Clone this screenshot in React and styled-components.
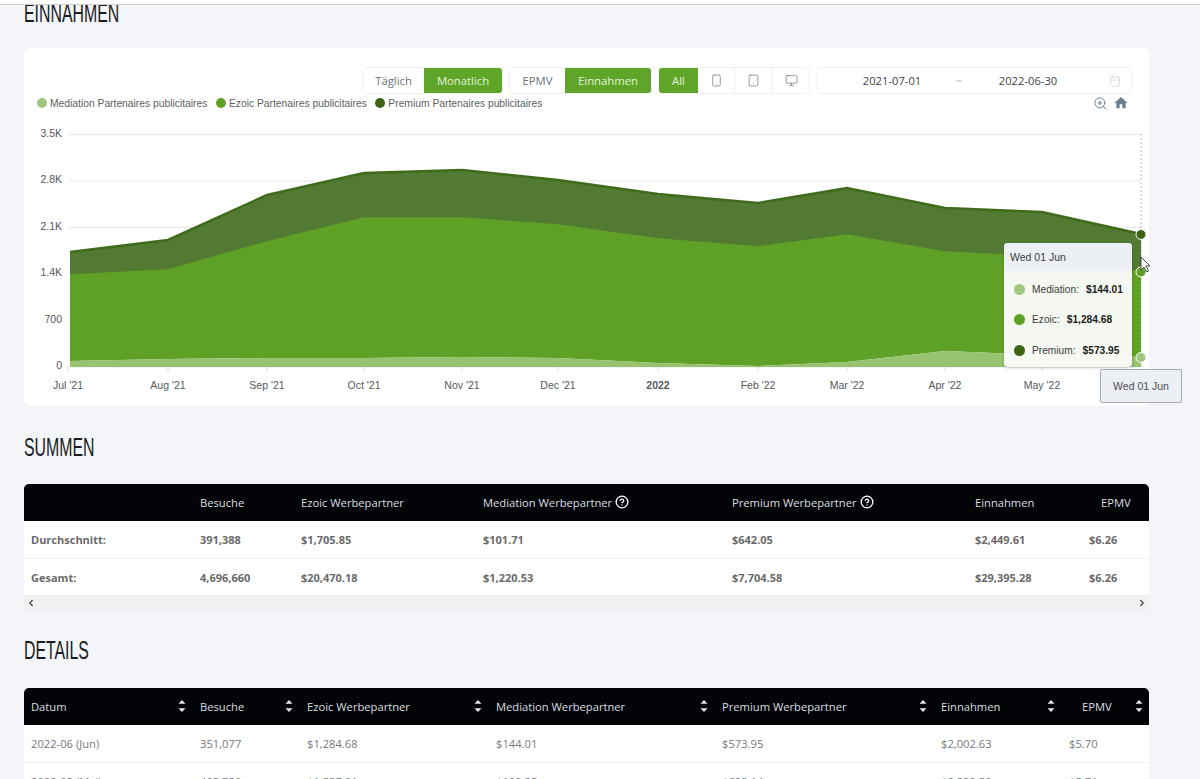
import React from "react";
import styled, { createGlobalStyle } from "styled-components";
import { CircleHelp, Smartphone, Tablet, Monitor, Calendar, ZoomIn, ChevronLeft, ChevronRight } from "lucide-react";

const Global = createGlobalStyle`
  html, body { margin: 0; padding: 0; height: 779px; overflow: hidden; background: #f4f5f9; }
  body { font-family: "Open Sans", "Liberation Sans", sans-serif; }
  * { box-sizing: border-box; }
`;

const TopStrip = styled.div`
  height: 5px;
  background: #fff;
  border-bottom: 1px solid #cfd1d4;
`;
const Page = styled.main`
  padding: 0 51px 0 24px;
`;
const Title = styled.h2`
  margin: ${p => p.$mt || 0}px 0 0;
  height: ${p => (p.$clipped ? "24px" : "40px")};
  line-height: ${p => (p.$clipped ? "16px" : "40px")};
  overflow: hidden;
  font-family: "Liberation Sans", sans-serif;
  font-weight: 400;
  font-size: 26px;
  color: #1a1c20;
  span {
    display: inline-block;
    transform: scaleX(0.61);
    transform-origin: left center;
  }
`;
const Card = styled.section`
  position: relative;
  margin: 19px 0 21px;
  height: 358px;
  background: #fff;
  border-radius: 6px;
  padding-top: 19px;
`;
const Toolbar = styled.div`
  display: flex;
  justify-content: flex-end;
  gap: 6px;
  padding-right: 17px;
`;
const Segment = styled.div`
  display: flex;
  height: 27px;
  border-radius: 4px;
  overflow: hidden;
  border: 1px solid #f0f1f3;
`;
const SegButton = styled.button`
  width: ${p => p.$w}px;
  border: 0;
  border-right: ${p => (p.$divider ? "1px solid #f0f1f3" : "0")};
  padding: 0;
  display: flex;
  align-items: center;
  justify-content: center;
  background: ${p => (p.$active ? "#5fa529" : "#fff")};
  color: ${p => (p.$active ? "#e6f2da" : "#6d7178")};
  font: 400 11.3px "Open Sans", sans-serif;
`;
const DateBox = styled.div`
  width: 315px;
  height: 27px;
  margin-left: 1px;
  display: grid;
  grid-template-columns: 96px 38px 100px 1fr;
  align-items: center;
  justify-items: center;
  border: 1px solid #f0f1f3;
  border-radius: 4px;
  color: #40444a;
  font-size: 11.2px;
  padding-left: 26px;
  svg { color: #c9ccd1; justify-self: end; margin-right: 10px; }
`;
const Sep = styled.span`
  color: #b5b8bd;
`;
const LegendRow = styled.div`
  margin-top: 2px;
  height: 14px;
  padding: 0 20px 0 13px;
  display: flex;
  align-items: center;
  justify-content: space-between;
`;
const Legend = styled.div`
  display: flex;
  gap: 8.5px;
`;
const LegendItem = styled.span`
  display: flex;
  align-items: center;
  gap: 3px;
  font: 10.3px "Liberation Sans", sans-serif;
  color: #5c5f63;
`;
const Dot = styled.i`
  display: block;
  width: ${p => p.$s || 10}px;
  height: ${p => p.$s || 10}px;
  border-radius: 50%;
  background: ${p => p.$c};
`;
const ChartTools = styled.div`
  display: flex;
  align-items: center;
  gap: 5px;
  color: #6e8192;
`;
const HomeIcon = styled.svg`
  width: 16px;
  height: 16px;
  fill: #6e8192;
`;
const ChartSvg = styled.svg`
  display: block;
  margin-top: 5px;
`;
const Tooltip = styled.div`
  position: absolute;
  left: 980px;
  top: 195px;
  width: 128px;
  height: 124px;
  background: rgba(250, 251, 248, 0.97);
  border-radius: 4px;
  box-shadow: 0 1px 3px rgba(0,0,0,.2);
  font: 10.2px "Liberation Sans", sans-serif;
  color: #3a3d40;
  overflow: hidden;
`;
const TooltipHead = styled.div`
  height: 28px;
  line-height: 28px;
  padding-left: 6px;
  background: #eceff3;
  font-size: 10.5px;
`;
const TooltipBody = styled.div`
  display: flex;
  flex-direction: column;
  gap: 18.5px;
  padding: 12px 0 0 10px;
`;
const TooltipRow = styled.div`
  display: flex;
  align-items: center;
  height: 12px;
  b { color: #222; margin-left: 7px; font-weight: 700; }
  span { margin-left: 7px; }
`;
const XLabel = styled.div`
  position: absolute;
  left: 1076px;
  top: 321px;
  width: 82px;
  height: 34px;
  display: flex;
  align-items: center;
  justify-content: center;
  background: #eceff3;
  border: 1px solid #a6a9ae;
  border-radius: 2px;
  font: 10.5px "Liberation Sans", sans-serif;
  color: #4a4d52;
`;
const Table = styled.div`
  margin-top: ${p => p.$mt}px;
  border-radius: 5px 5px 0 0;
  overflow: hidden;
`;
const Row = styled.div`
  display: grid;
  grid-template-columns: ${p => p.$cols};
  height: ${p => p.$h || 37}px;
  background: #fff;
  border-bottom: 1px solid #eef0f2;
  align-items: center;
  font-size: ${p => (p.$bold ? 11 : 11.2)}px;
  font-weight: ${p => (p.$bold ? 700 : 400)};
  color: ${p => (p.$bold ? "#6a6a6a" : "#77797c")};
`;
const HeadRow = styled(Row)`
  background: #020407;
  color: #dcdde0;
  border-bottom: 0;
  font-weight: 400;
  font-size: 11.2px;
  padding-bottom: 1px;
`;
const Cell = styled.div`
  padding-left: ${p => p.$pl ?? 7}px;
  white-space: nowrap;
`;
const HeadCell = styled(Cell)`
  display: flex;
  align-items: center;
  gap: 3px;
  justify-content: ${p => (p.$sort ? "space-between" : "flex-start")};
  padding-right: ${p => (p.$sort ? (p.$pr ?? 7) : 0)}px;
`;
const Scroller = styled.div`
  height: 14px;
  background: #f0f1f3;
  display: flex;
  justify-content: space-between;
  align-items: center;
  padding: 0 2px;
  color: #444;
`;
const SortSvg = styled.svg`
  width: 8px;
  height: 14px;
  fill: #e8e8e8;
  flex: none;
`;
const Cursor = styled.svg`
  position: absolute;
  left: 1116px;
  top: 208px;
  width: 11px;
  height: 17px;
`;

const Sort = () => (
  <SortSvg viewBox="0 0 8 14"><path d="M4 1 7.5 4.8H.5zM4 13 .5 9.2h7z" /></SortSvg>
);

const X = [70, 168, 267, 364, 462, 558, 658, 758, 847, 945, 1042, 1141];
const PREM = [252, 240, 195, 173, 170, 180, 194, 203, 188, 208, 212, 234];
const EZ = [275, 270, 242, 218, 218, 225, 239, 247, 235, 252, 257, 272];
const MED = [361, 359, 358, 358, 357, 358, 363, 366, 362, 351, 355, 357];
const BASE = 367;
const line = a => a.map((y, i) => `${X[i]},${y}`).join(" L");
const area = (top, bottom) => {
  const back = bottom ? [...bottom].reverse().map((y, i) => `${X[X.length - 1 - i]},${y}`).join(" L") : `${X[X.length - 1]},${BASE} L${X[0]},${BASE}`;
  return `M${line(top)} L${back} Z`;
};
const GRID = [["3.5K", 134.5], ["2.8K", 181], ["2.1K", 227.5], ["1.4K", 274], ["700", 320.5], ["0", 367]];
const TICKS = [["Jul '21", 68], ["Aug '21", 168], ["Sep '21", 267], ["Oct '21", 364], ["Nov '21", 462], ["Dec '21", 558], ["2022", 658, true], ["Feb '22", 758], ["Mar '22", 847], ["Apr '22", 945], ["May '22", 1042]];

const Chart = () => (
  <ChartSvg width="1125" height="285" viewBox="24 115 1125 285" fontFamily="Liberation Sans, sans-serif" fontSize="10.5" fill="#55585c">
    {GRID.map(([l, y]) => (
      <g key={l}>
        <line x1="69" x2="1141" y1={y} y2={y} stroke="#e6e7e9" />
        <text x="62" y={y + 2} textAnchor="end">{l}</text>
      </g>
    ))}
    <line x1="1141" x2="1141" y1="134" y2="367" stroke="#b9bcc0" strokeDasharray="2 2" />
    <path d={area(PREM, EZ)} fill="#527a33" />
    <path d={area(EZ, MED)} fill="#5fa026" />
    <path d={area(MED)} fill="#97c26f" />
    <path d={`M${line(PREM)}`} fill="none" stroke="#3f6b1a" strokeWidth="2.5" />
    <path d={`M${line(EZ)}`} fill="none" stroke="#5fa026" strokeWidth="1.5" />
    {TICKS.map(([l, x, b]) => (
      <g key={l}>
        <line x1={x} x2={x} y1="367" y2="372" stroke="#dcdde0" />
        <text x={x} y="388.5" textAnchor="middle" fontWeight={b ? 700 : 400}>{l}</text>
      </g>
    ))}
    <circle cx="1141" cy="234.5" r="5" fill="#3d6314" stroke="#fff" />
    <circle cx="1141" cy="272" r="5" fill="#5fa127" stroke="#fff" />
    <circle cx="1141" cy="357.5" r="5" fill="#a0c77f" stroke="#fff" />
  </ChartSvg>
);

const SUM_COLS = "169px 101px 182px 249px 243px 114px 67px";
const DET_COLS = "169px 107px 189px 226px 219px 128px 87px";

const Help = () => <CircleHelp size={14} color="#fff" strokeWidth={2.3} />;

export default function App() {
  return (
    <>
      <Global />
      <TopStrip />
      <Page>
        <Title $clipped><span>EINNAHMEN</span></Title>
        <Card>
          <Toolbar>
            <Segment>
              <SegButton $w={61}>Täglich</SegButton>
              <SegButton $w={78} $active>Monatlich</SegButton>
            </Segment>
            <Segment>
              <SegButton $w={55}>EPMV</SegButton>
              <SegButton $w={86} $active>Einnahmen</SegButton>
            </Segment>
            <Segment>
              <SegButton $w={39} $active>All</SegButton>
              <SegButton $w={37} $divider><Smartphone size={13} strokeWidth={1.3} /></SegButton>
              <SegButton $w={38} $divider><Tablet size={13} strokeWidth={1.3} /></SegButton>
              <SegButton $w={36}><Monitor size={13} strokeWidth={1.3} /></SegButton>
            </Segment>
            <DateBox>
              <span>2021-07-01</span>
              <Sep>~</Sep>
              <span>2022-06-30</span>
              <Calendar size={12} strokeWidth={1.2} />
            </DateBox>
          </Toolbar>
          <LegendRow>
            <Legend>
              <LegendItem><Dot $c="#a0c77f" />Mediation Partenaires publicitaires</LegendItem>
              <LegendItem><Dot $c="#5fa127" />Ezoic Partenaires publicitaires</LegendItem>
              <LegendItem><Dot $c="#3d6314" />Premium Partenaires publicitaires</LegendItem>
            </Legend>
            <ChartTools>
              <ZoomIn size={15} strokeWidth={1.6} />
              <HomeIcon viewBox="0 0 24 24"><path d="M10 20v-6h4v6h5v-8h3L12 3 2 12h3v8z" /></HomeIcon>
            </ChartTools>
          </LegendRow>
          <Chart />
          <Tooltip>
            <TooltipHead>Wed 01 Jun</TooltipHead>
            <TooltipBody>
              <TooltipRow><Dot $s={11} $c="#a0c77f" /><span>Mediation:</span><b>$144.01</b></TooltipRow>
              <TooltipRow><Dot $s={11} $c="#5fa127" /><span>Ezoic:</span><b>$1,284.68</b></TooltipRow>
              <TooltipRow><Dot $s={11} $c="#3d6314" /><span>Premium:</span><b>$573.95</b></TooltipRow>
            </TooltipBody>
          </Tooltip>
          <XLabel>Wed 01 Jun</XLabel>
          <Cursor viewBox="0 0 11 17"><path d="M1 1v13l3-3 2.5 5 2-1-2.5-5H10z" fill="#fff" stroke="#333" strokeWidth=".9" /></Cursor>
        </Card>

        <Title><span>SUMMEN</span></Title>
        <Table $mt={17}>
          <HeadRow $cols={SUM_COLS}>
            <HeadCell />
            <HeadCell>Besuche</HeadCell>
            <HeadCell>Ezoic Werbepartner</HeadCell>
            <HeadCell>Mediation Werbepartner <Help /></HeadCell>
            <HeadCell>Premium Werbepartner <Help /></HeadCell>
            <HeadCell>Einnahmen</HeadCell>
            <HeadCell $pl={19}>EPMV</HeadCell>
          </HeadRow>
          <Row $cols={SUM_COLS} $bold $h={38}>
            <Cell>Durchschnitt:</Cell><Cell>391,388</Cell><Cell>$1,705.85</Cell><Cell>$101.71</Cell><Cell>$642.05</Cell><Cell>$2,449.61</Cell><Cell>$6.26</Cell>
          </Row>
          <Row $cols={SUM_COLS} $bold $h={37}>
            <Cell>Gesamt:</Cell><Cell>4,696,660</Cell><Cell>$20,470.18</Cell><Cell>$1,220.53</Cell><Cell>$7,704.58</Cell><Cell>$29,395.28</Cell><Cell>$6.26</Cell>
          </Row>
          <Scroller><ChevronLeft size={10} strokeWidth={3} /><ChevronRight size={10} strokeWidth={3} /></Scroller>
        </Table>

        <Title $mt={20}><span>DETAILS</span></Title>
        <Table $mt={18}>
          <HeadRow $cols={DET_COLS}>
            <HeadCell $sort>Datum<Sort /></HeadCell>
            <HeadCell $sort>Besuche<Sort /></HeadCell>
            <HeadCell $sort>Ezoic Werbepartner<Sort /></HeadCell>
            <HeadCell $sort>Mediation Werbepartner<Sort /></HeadCell>
            <HeadCell $sort>Premium Werbepartner<Sort /></HeadCell>
            <HeadCell $sort>Einnahmen<Sort /></HeadCell>
            <HeadCell $sort $pl={20} $pr={6}>EPMV<Sort /></HeadCell>
          </HeadRow>
          <Row $cols={DET_COLS} $h={38}>
            <Cell>2022-06 (Jun)</Cell><Cell>351,077</Cell><Cell>$1,284.68</Cell><Cell>$144.01</Cell><Cell>$573.95</Cell><Cell>$2,002.63</Cell><Cell>$5.70</Cell>
          </Row>
          <Row $cols={DET_COLS} $h={38}>
            <Cell>2022-05 (Mai)</Cell><Cell>405,750</Cell><Cell>$1,537.01</Cell><Cell>$109.35</Cell><Cell>$693.14</Cell><Cell>$2,339.50</Cell><Cell>$5.71</Cell>
          </Row>
        </Table>
      </Page>
    </>
  );
}
